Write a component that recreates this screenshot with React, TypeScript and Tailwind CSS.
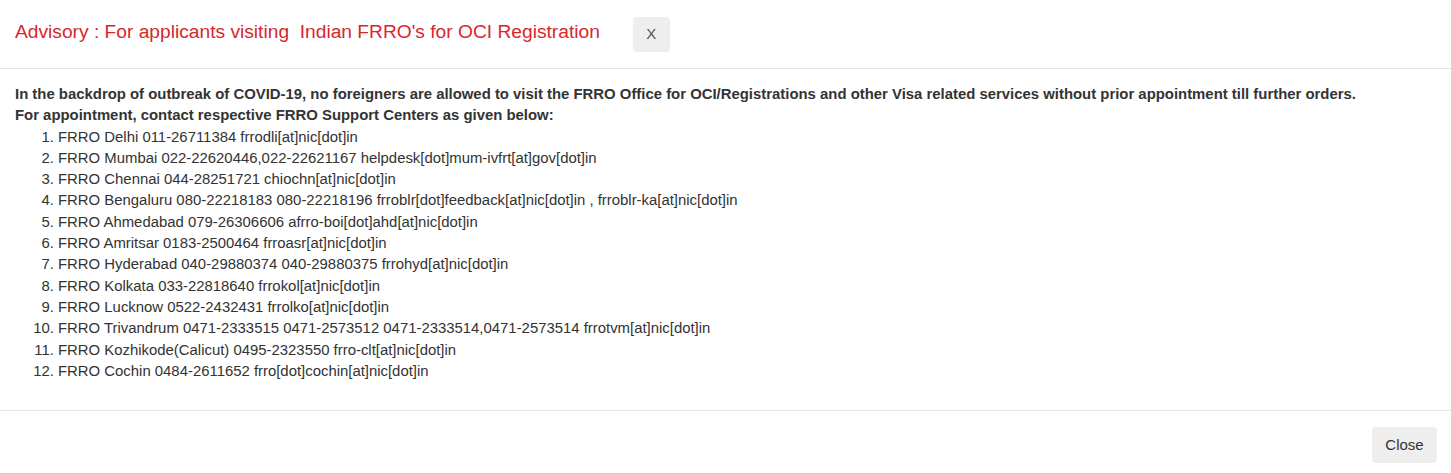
import React from "react";

const centers = [
  "FRRO Delhi 011-26711384 frrodli[at]nic[dot]in",
  "FRRO Mumbai 022-22620446,022-22621167 helpdesk[dot]mum-ivfrt[at]gov[dot]in",
  "FRRO Chennai 044-28251721 chiochn[at]nic[dot]in",
  "FRRO Bengaluru 080-22218183 080-22218196 frroblr[dot]feedback[at]nic[dot]in , frroblr-ka[at]nic[dot]in",
  "FRRO Ahmedabad 079-26306606 afrro-boi[dot]ahd[at]nic[dot]in",
  "FRRO Amritsar 0183-2500464 frroasr[at]nic[dot]in",
  "FRRO Hyderabad 040-29880374 040-29880375 frrohyd[at]nic[dot]in",
  "FRRO Kolkata 033-22818640 frrokol[at]nic[dot]in",
  "FRRO Lucknow 0522-2432431 frrolko[at]nic[dot]in",
  "FRRO Trivandrum 0471-2333515 0471-2573512 0471-2333514,0471-2573514 frrotvm[at]nic[dot]in",
  "FRRO Kozhikode(Calicut) 0495-2323550 frro-clt[at]nic[dot]in",
  "FRRO Cochin 0484-2611652 frro[dot]cochin[at]nic[dot]in",
];

export default function App() {
  return (
    <div className="w-[1451px] h-[473px] bg-white text-[#333] font-['Liberation_Sans',Arial,sans-serif] flex flex-col">
      {/* Header */}
      <div className="h-[69px] px-[15px] flex items-center border-b border-[#e5e5e5]">
        <h4 className="text-[19.2px] leading-[22px] text-[#d9262c] mb-[4px]">
          Advisory : For applicants visiting{"\u00a0"} Indian FRRO's for OCI Registration
        </h4>
        <button className="ml-[33px] w-[37px] h-[35px] rounded-[4px] bg-[#eeeeee] text-[#555] text-[15px] flex items-center justify-center">
          X
        </button>
      </div>

      {/* Body */}
      <div className="px-[15px] pt-[15px] pb-[15px] text-[14.9px] leading-[21.3px]">
        <p className="font-bold">
          In the backdrop of outbreak of COVID-19, no foreigners are allowed to visit the FRRO Office for
          OCI/Registrations and other Visa related services without prior appointment till further orders.
        </p>
        <p className="font-bold">For appointment, contact respective FRRO Support Centers as given below:</p>
        <ol className="list-decimal pl-[43px] mb-[10px]">
          {centers.map((c) => (
            <li key={c}>{c}</li>
          ))}
        </ol>
      </div>

      {/* Footer */}
      <div className="border-t border-[#e5e5e5] mt-auto h-[63px] px-[14px] flex items-start justify-end pt-[16px]">
        <button className="h-[36px] w-[65px] rounded-[4px] bg-[#eeeeee] text-[#333] text-[15px]">
          Close
        </button>
      </div>
    </div>
  );
}
